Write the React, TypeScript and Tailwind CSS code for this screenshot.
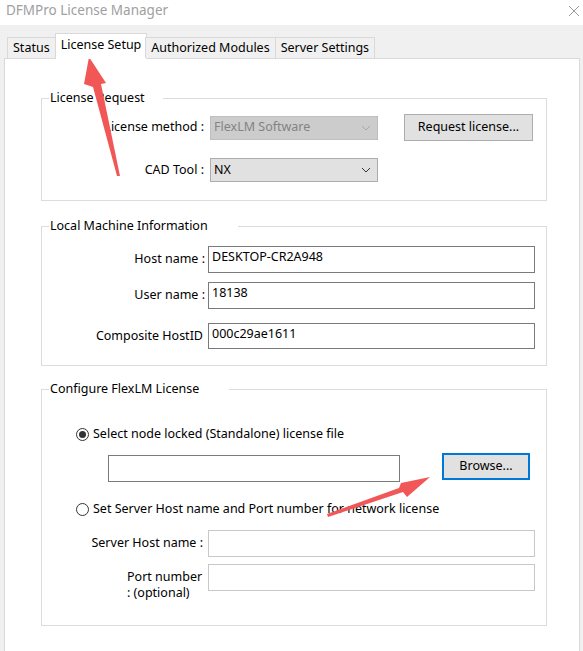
import React from "react";

const font = { fontFamily: '"Noto Sans", "Liberation Sans", sans-serif' };

const tabs = ["Status", "License Setup", "Authorized Modules", "Server Settings"];

function Chevron({ color }: { color: string }) {
  return (
    <svg width="10" height="6" viewBox="0 0 10 6" className="shrink-0">
      <path d="M1 1 L5 5 L9 1" fill="none" stroke={color} strokeWidth="1" />
    </svg>
  );
}

function Group({ title, children, className, gap = "pr-[30px]" }: { title: string; children: React.ReactNode; className?: string; gap?: string }) {
  return (
    <fieldset className={`border border-[#dcdcdc] w-[506px] ${className ?? ""}`}>
      <legend className={`ml-[7px] pl-[1px] leading-[16px] ${gap}`}>{title}</legend>
      {children}
    </fieldset>
  );
}

function Radio({ checked }: { checked?: boolean }) {
  return (
    <span className="w-[13px] h-[13px] rounded-full border border-[#333] bg-white flex items-center justify-center shrink-0">
      {checked && <span className="w-[7px] h-[7px] rounded-full bg-[#333]" />}
    </span>
  );
}

export default function App() {
  return (
    <div className="relative w-[583px] h-[651px] overflow-hidden bg-[#f0f0f0] text-[12.5px] text-black" style={font}>
      {/* Title bar */}
      <div className="h-[25px] bg-white flex items-center justify-between pl-[6px] pr-[3px]">
        <span className="text-[#a0a0a0] text-[13.5px] -mt-[4px]">DFMPro License Manager</span>
        <svg width="12" height="12" viewBox="0 0 12 12" className="-mt-[4px]">
          <path d="M1 1 L11 11 M11 1 L1 11" stroke="#9a9a9a" strokeWidth="1" />
        </svg>
      </div>

      {/* Tabs */}
      <div className="pt-[9px] pl-[4px]">
        <div className="flex items-end h-[24px] pl-[3px] relative z-10">
          {tabs.map((t, i) =>
            i === 1 ? (
              <div key={t} className="h-[26px] -mb-[1px] bg-white border border-b-0 border-[#d9d9d9] px-[5px] flex items-center -mx-[1px] pb-[2px]">
                {t}
              </div>
            ) : (
              <div key={t} className="h-[21px] bg-[#f0f0f0] border border-b-0 border-[#d9d9d9] px-[5px] flex items-center -ml-[1px] first:ml-0">
                {t}
              </div>
            )
          )}
        </div>

        {/* Panel */}
        <div className="w-[576px] h-[600px] bg-white border border-[#d9d9d9] pl-[36px] pt-[31px]">
          <Group title="License Request" className="h-[111px]" gap="pr-[18px]">
            <div className="pt-[8px]">
              <div className="flex items-center h-[27px]">
                <div className="w-[163px] text-right pr-[1px]">License method :</div>
                <div className="ml-[5px] w-[168px] h-[24px] bg-[#cccccc] border border-[#bfbfbf] flex items-center justify-between pl-[3px] pr-[6px] text-[#838383]">
                  FlexLM Software
                  <Chevron color="#a8a8a8" />
                </div>
                <div className="ml-[26px] w-[129px] h-[27px] bg-[#e1e1e1] border border-[#adadad] flex items-center justify-center">
                  Request license...
                </div>
              </div>
              <div className="flex items-center h-[24px] mt-[17px]">
                <div className="w-[163px] text-right pr-[1px]">CAD Tool :</div>
                <div className="ml-[5px] w-[168px] h-[24px] bg-[#e1e1e1] border border-[#adadad] flex items-center justify-between pl-[3px] pr-[6px]">
                  NX
                  <Chevron color="#333" />
                </div>
              </div>
            </div>
          </Group>

          <Group title="Local Machine Information" className="mt-[17px] h-[148px]">
            <div className="pt-[12px] flex flex-col">
              {[
                ["Host name :", "DESKTOP-CR2A948", "h-[27px]", ""],
                ["User name :", "18138", "h-[27px]", "mt-[9px]"],
                ["Composite HostID", "000c29ae1611", "h-[26px]", "mt-[14px]"],
              ].map(([label, value, h, mt]) => (
                <div key={label} className={`flex items-center ${mt}`}>
                  <div className={`w-[163px] text-right ${label.startsWith("Composite") ? "pr-[2px]" : ""}`}>{label}</div>
                  <div className={`ml-[3px] w-[327px] ${h} border border-[#7a7a7a] pl-[3px] pt-[2px] leading-[16px]`}>{value}</div>
                </div>
              ))}
            </div>
          </Group>

          <Group title="Configure FlexLM License" className="mt-[15px] h-[245px]">
            <div className="pt-[29px] pl-[34px]">
              <div className="flex items-center gap-[4px] h-[16px]">
                <Radio checked />
                <span>Select node locked (Standalone) license file</span>
              </div>
              <div className="flex items-start mt-[11px] pl-[32px]">
                <div className="w-[292px] h-[27px] border border-[#7a7a7a] mt-[2px]" />
                <div className="ml-[42px] w-[88px] h-[27px] bg-[#e1e1e1] border-2 border-[#0078d7] flex items-center justify-center">
                  Browse...
                </div>
              </div>
              <div className="flex items-center gap-[4px] h-[16px] mt-[19px]">
                <Radio />
                <span>Set Server Host name and Port number for network license</span>
              </div>
            </div>
            <div className="flex items-center mt-[13px]">
              <div className="w-[161px] text-right">Server Host name :</div>
              <div className="ml-[5px] w-[327px] h-[27px] border border-[#c8c8c8]" />
            </div>
            <div className="flex items-start mt-[7px]">
              <div className="w-[161px] flex justify-end">
                <div className="w-[76px] mt-[5px] leading-[16px] whitespace-nowrap">
                  <div>Port number</div>
                  <div>: (optional)</div>
                </div>
              </div>
              <div className="ml-[5px] w-[327px] h-[27px] border border-[#c8c8c8]" />
            </div>
          </Group>
        </div>
      </div>

      {/* Annotation arrows */}
      <svg className="absolute inset-0 pointer-events-none" width="583" height="651" viewBox="0 0 583 651">
        <polygon points="89,57 106,83 101,84 120,176 117,176 93,87 84,84" fill="#f25757" />
        <polygon points="430,477 407,497 403,492 328,517 327,514 399,488 401,483" fill="#f25757" />
      </svg>
    </div>
  );
}
